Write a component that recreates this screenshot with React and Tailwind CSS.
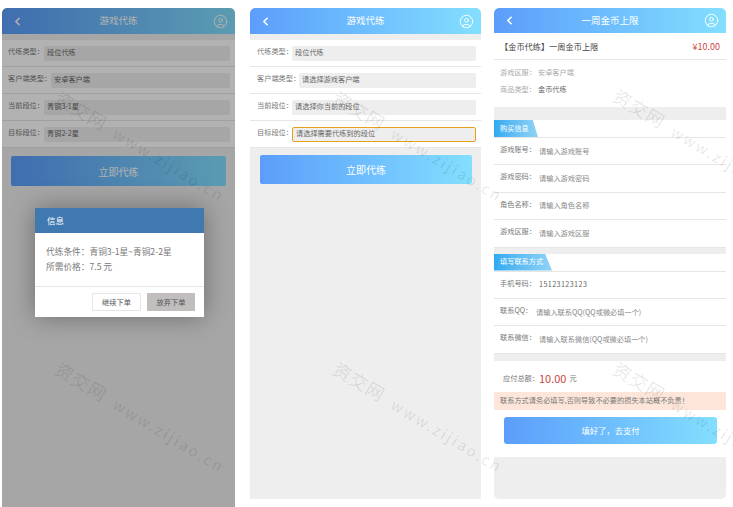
import React from 'react';
import { ChevronLeft, CircleUser } from 'lucide-react';

const font = { fontFamily: '"Noto Sans CJK SC", "Noto Sans", sans-serif' };

const Header = ({ title, h = 'h-[26px]' }) => (
  <div className={`${h} shrink-0 flex items-center justify-between pl-[9px] pr-[7px] rounded-t-[5px] bg-gradient-to-r from-[#5c9dfb] to-[#83dffe] text-white`}>
    <ChevronLeft size={13} strokeWidth={3} />
    <span className="text-[9.5px] leading-none">{title}</span>
    <CircleUser size={15} strokeWidth={1.5} />
  </div>
);

const SelectRow = ({ label, value, inputClass = '', active = false, labelW = 'w-[36px]', pad = 'pl-[6px]' }) => (
  <div className={`h-[27px] shrink-0 flex items-center ${pad} pr-[5px] bg-white border-b border-[#e6e6e6]`}>
    <span className={`${labelW} shrink-0 text-[7.2px] leading-none text-[#777] -mt-[3px] whitespace-nowrap`}>{label}</span>
    <div className={`h-[15px] flex-1 flex items-center pl-[3px] text-[7.2px] leading-none text-[#666] bg-[#eee] rounded-[2px] ${active ? 'border border-[#e5a11c]' : ''} ${inputClass}`}>
      {value}
    </div>
  </div>
);

const GameForm = ({ rows, dark }) => (
  <>
    <Header title="游戏代练" />
    <div className="h-[6px] shrink-0 bg-[#eee]" />
    {rows.map((r) => (
      <SelectRow key={r.label} {...r} />
    ))}
    <div className={`${dark ? 'mt-[8px] mx-[9px] h-[30px]' : 'mt-[7px] ml-[10px] mr-[9px] h-[29px]'} shrink-0 flex items-center justify-center rounded-[2px] bg-gradient-to-r from-[#5c9dfb] to-[#83dffe] text-white text-[10px]`}>
      立即代练
    </div>
  </>
);

const InputRow = ({ label, value, dark, tight }) => (
  <div className="h-[27.4px] shrink-0 flex items-center pl-[6px] bg-white border-b border-[#e6e6e6]">
    <span className="w-[39px] shrink-0 text-[7.2px] leading-none text-[#777] -mt-[3px] whitespace-nowrap">{label}</span>
    <span className={`text-[7.2px] leading-none whitespace-nowrap ${tight ? '-ml-[3px]' : ''} ${dark ? 'text-[#666] tracking-[0.4px]' : 'text-[#888]'}`}>{value}</span>
  </div>
);

const SectionTab = ({ children, w }) => (
  <div className="h-[18px] shrink-0 bg-white border-b border-[#e6e6e6]">
    <div className={`${w} h-[17px] flex items-center pl-[6px] text-[7.2px] leading-none text-white whitespace-nowrap bg-gradient-to-r from-[#2eaaf0] to-[#8fd3f5] [clip-path:polygon(0_0,88%_0,100%_100%,0_100%)]`}>
      {children}
    </div>
  </div>
);

const Watermark = ({ left, top }) => (
  <div
    className="absolute origin-top-left rotate-[31deg] whitespace-nowrap text-[#000]/10 flex items-baseline gap-[11px]"
    style={{ left, top }}
  >
    <span className="text-[18px] tracking-[1px]">资交网</span>
    <span className="text-[15px] tracking-[2.3px]">www.zijiao.cn</span>
  </div>
);

export default function App() {
  return (
    <div className="relative w-[733px] h-[507px] overflow-hidden bg-white" style={font}>
      <div className="flex gap-[13px] pt-[8px] pl-[2px]">
        {/* 弹窗状态 */}
        <div className="relative w-[233px] h-[499px] mr-[2px] flex flex-col bg-[#eee] rounded-t-[5px] overflow-hidden">
          <GameForm
            dark
            rows={[
              { label: '代练类型：', value: '段位代练', labelW: 'w-[36px]' },
              { label: '客户端类型：', value: '安卓客户端', labelW: 'w-[43px]' },
              { label: '当前段位：', value: '青铜3-1星', labelW: 'w-[36px]' },
              { label: '目标段位：', value: '青铜2-2星', labelW: 'w-[36px]' },
            ]}
          />
          <div className="absolute inset-0 bg-black/30" />
          <div className="absolute left-[33px] top-[200px] w-[169px] bg-white shadow-[0_0_24px_rgba(0,0,0,0.35)]">
            <div className="h-[25px] flex items-center pl-[12px] bg-[#4078b0] text-white text-[8.5px] leading-none">信息</div>
            <div className="h-[54px] flex flex-col justify-center gap-[5px] pl-[11px] text-[8.7px] leading-[10px] text-[#777] border-b border-[#e6e6e6]">
              <div>代练条件：青铜3-1星~青铜2-2星</div>
              <div>所需价格：7.5 元</div>
            </div>
            <div className="h-[30px] flex items-start justify-end gap-[6px] pt-[6px] pr-[9px]">
              <div className="w-[49px] h-[18px] flex items-center justify-center text-[7.2px] text-[#555] border border-[#e6e6e6]">继续下单</div>
              <div className="w-[48px] h-[18px] flex items-center justify-center text-[7.2px] text-[#555] bg-[#c2bebe]">放弃下单</div>
            </div>
          </div>
        </div>

        {/* 填写表单 */}
        <div className="w-[231px] h-[491px] flex flex-col bg-[#eee] rounded-t-[5px] overflow-hidden">
          <GameForm
            rows={[
              { label: '代练类型：', value: '段位代练', labelW: 'w-[35px]', pad: 'pl-[7px]' },
              { label: '客户端类型：', value: '请选择游戏客户端', labelW: 'w-[42px]', pad: 'pl-[7px]' },
              { label: '当前段位：', value: '请选择你当前的段位', labelW: 'w-[35px]', pad: 'pl-[7px]' },
              { label: '目标段位：', value: '请选择需要代练到的段位', labelW: 'w-[35px]', pad: 'pl-[7px]', active: true },
            ]}
          />
        </div>

        {/* 下单页 */}
        <div className="w-[232px] h-[491px] flex flex-col bg-[#eee] rounded-[5px] overflow-hidden">
          <Header title="一周金币上限" h="h-[25px]" />
          <div className="h-[27px] shrink-0 flex items-center justify-between pl-[6px] pr-[6px] bg-white border-b border-[#e6e6e6]">
            <span className="text-[8.2px] leading-none text-[#444] whitespace-nowrap">【金币代练】一周金币上限</span>
            <span className="text-[9px] leading-none text-[#c9473e]">¥10.00</span>
          </div>
          <div className="h-[47px] shrink-0 flex flex-col gap-[10px] pt-[9px] pl-[6px] bg-white text-[7.2px] leading-none">
            <div className="text-[#aaa]">游戏区服：<span className="ml-[2px]">安卓客户端</span></div>
            <div className="text-[#aaa]">商品类型：<span className="ml-[2px] text-[#666]">金币代练</span></div>
          </div>
          <div className="h-[13px] shrink-0 bg-[#eee]" />
          <SectionTab w="w-[44px]">购买信息</SectionTab>
          <InputRow label="游戏账号：" value="请输入游戏账号" />
          <InputRow label="游戏密码：" value="请输入游戏密码" />
          <InputRow label="角色名称：" value="请输入角色名称" />
          <InputRow label="游戏区服：" value="请输入游戏区服" />
          <div className="h-[6px] shrink-0 bg-[#eee]" />
          <SectionTab w="w-[58px]">填写联系方式</SectionTab>
          <InputRow label="手机号码：" value="15123123123" dark />
          <InputRow label="联系QQ：" value="请输入联系QQ(QQ或微必填一个)" tight />
          <InputRow label="联系微信：" value="请输入联系微信(QQ或微必填一个)" />
          <div className="h-[7px] shrink-0 bg-[#eee]" />
          <div className="h-[31px] shrink-0 flex items-center pl-[9px] pt-[4px] bg-white text-[7.2px] leading-none text-[#777]">
            应付总额：<span className="text-[11px] text-[#c9473e]">10.00</span>
            <span className="ml-[3px]">元</span>
          </div>
          <div className="h-[18px] shrink-0 flex items-center pl-[6px] bg-[#fde6d9] text-[7.2px] leading-none text-[#777] whitespace-nowrap">
            联系方式请务必填写,否则导致不必要的损失本站概不负责！
          </div>
          <div className="h-[47px] shrink-0 bg-white pt-[7px]">
            <div className="ml-[10px] w-[213px] h-[27px] flex items-center justify-center rounded-[3px] bg-gradient-to-r from-[#5c9dfb] to-[#83dffe] text-white text-[8.3px]">
              填好了，去支付
            </div>
          </div>
        </div>
      </div>

      {/* 水印 */}
      <div className="absolute inset-0 overflow-hidden pointer-events-none">
        <Watermark left={64} top={355} />
        <Watermark left={342} top={355} />
        <Watermark left={622} top={355} />
        <Watermark left={64} top={84} />
        <Watermark left={342} top={84} />
        <Watermark left={622} top={82} />
      </div>
    </div>
  );
}
